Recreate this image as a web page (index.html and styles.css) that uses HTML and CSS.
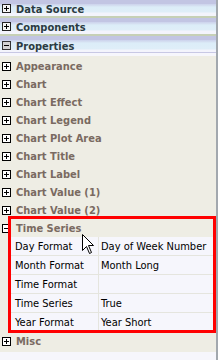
FILE: index.html
```html
<!DOCTYPE html>
<html lang="en">
<head>
    <meta charset="UTF-8">
    <title>Properties</title>
    <link rel="stylesheet" href="styles.css">
</head>
<body>
    <div class="panel">
        <div class="group">
            <svg class="toggle" width="9" height="9" viewBox="0 0 9 9"><rect x="0.5" y="0.5" width="8" height="8" fill="#f4f4f4" stroke="#222"/><path d="M2 4.5h5M4.5 2v5" stroke="#000"/></svg>
            Data Source
        </div>
        <div class="group">
            <svg class="toggle" width="9" height="9" viewBox="0 0 9 9"><rect x="0.5" y="0.5" width="8" height="8" fill="#f4f4f4" stroke="#222"/><path d="M2 4.5h5M4.5 2v5" stroke="#000"/></svg>
            Components
        </div>
        <div class="group open">
            <svg class="toggle" width="9" height="9" viewBox="0 0 9 9"><rect x="0.5" y="0.5" width="8" height="8" fill="#d4d4d4" stroke="#333"/><path d="M2 4.5h5" stroke="#000"/></svg>
            Properties
        </div>

        <ul class="cats">
            <li class="cat"><svg class="toggle" width="9" height="9" viewBox="0 0 9 9"><rect x="0.5" y="0.5" width="8" height="8" fill="#fff" stroke="#000"/><path d="M2 4.5h5M4.5 2v5" stroke="#000"/></svg>Appearance</li>
            <li class="cat"><svg class="toggle" width="9" height="9" viewBox="0 0 9 9"><rect x="0.5" y="0.5" width="8" height="8" fill="#fff" stroke="#000"/><path d="M2 4.5h5M4.5 2v5" stroke="#000"/></svg>Chart</li>
            <li class="cat"><svg class="toggle" width="9" height="9" viewBox="0 0 9 9"><rect x="0.5" y="0.5" width="8" height="8" fill="#fff" stroke="#000"/><path d="M2 4.5h5M4.5 2v5" stroke="#000"/></svg>Chart Effect</li>
            <li class="cat"><svg class="toggle" width="9" height="9" viewBox="0 0 9 9"><rect x="0.5" y="0.5" width="8" height="8" fill="#fff" stroke="#000"/><path d="M2 4.5h5M4.5 2v5" stroke="#000"/></svg>Chart Legend</li>
            <li class="cat"><svg class="toggle" width="9" height="9" viewBox="0 0 9 9"><rect x="0.5" y="0.5" width="8" height="8" fill="#fff" stroke="#000"/><path d="M2 4.5h5M4.5 2v5" stroke="#000"/></svg>Chart Plot Area</li>
            <li class="cat"><svg class="toggle" width="9" height="9" viewBox="0 0 9 9"><rect x="0.5" y="0.5" width="8" height="8" fill="#fff" stroke="#000"/><path d="M2 4.5h5M4.5 2v5" stroke="#000"/></svg>Chart Title</li>
            <li class="cat"><svg class="toggle" width="9" height="9" viewBox="0 0 9 9"><rect x="0.5" y="0.5" width="8" height="8" fill="#fff" stroke="#000"/><path d="M2 4.5h5M4.5 2v5" stroke="#000"/></svg>Chart Label</li>
            <li class="cat"><svg class="toggle" width="9" height="9" viewBox="0 0 9 9"><rect x="0.5" y="0.5" width="8" height="8" fill="#fff" stroke="#000"/><path d="M2 4.5h5M4.5 2v5" stroke="#000"/></svg>Chart Value (1)</li>
            <li class="cat"><svg class="toggle" width="9" height="9" viewBox="0 0 9 9"><rect x="0.5" y="0.5" width="8" height="8" fill="#fff" stroke="#000"/><path d="M2 4.5h5M4.5 2v5" stroke="#000"/></svg>Chart Value (2)</li>
            <li class="cat"><svg class="toggle" width="9" height="9" viewBox="0 0 9 9"><rect x="0.5" y="0.5" width="8" height="8" fill="#fff" stroke="#000"/><path d="M2 4.5h5" stroke="#000"/></svg>Time Series</li>
            <li>
                <table class="props">
                    <tr><td class="name">Day Format</td><td>Day of Week Number</td></tr>
                    <tr><td class="name">Month Format</td><td>Month Long</td></tr>
                    <tr><td class="name">Time Format</td><td></td></tr>
                    <tr><td class="name">Time Series</td><td>True</td></tr>
                    <tr><td class="name">Year Format</td><td>Year Short</td></tr>
                </table>
            </li>
            <li class="cat"><svg class="toggle" width="9" height="9" viewBox="0 0 9 9"><rect x="0.5" y="0.5" width="8" height="8" fill="#fff" stroke="#000"/><path d="M2 4.5h5M4.5 2v5" stroke="#000"/></svg>Misc</li>
        </ul>

        <!-- annotation box round the time series section -->
        <div class="highlight"></div>
        <svg class="pointer" width="13" height="21" viewBox="0 0 13 21"><path d="M0.5 0.5V16.5L4.5 12.5L7.5 19.5L9.5 18.5L6.5 11.5H11.5Z" fill="#fff" stroke="#000" stroke-linejoin="miter"/></svg>
    </div>
</body>
</html>
```

FILE: styles.css
```css
body {
    margin: 0;
    padding: 0;
    background-color: #f6f6fc;
    font-family: 'DejaVu Sans Condensed', 'Liberation Sans', sans-serif;
}

.panel {
    position: relative;
    width: 216px;
    height: 360px;
    border-right: 2px solid #a2a8ae;
    background-color: #f6f6fc;
}

/* Top level groups */
.group {
    display: flex;
    align-items: center;
    height: 18px;
    padding-left: 2px;
    font-size: 11px;
    font-weight: bold;
    color: #2b3b42;
    background: linear-gradient(to bottom,
        #c2c5e3 0, #c2c5e3 4px,
        #ccd2ec 4px, #d6e2f2 6px,
        #dcedf8 7px, #dfeef8 12px,
        #f3f4fc 13px, #f3f4fc 16px,
        #c6d0b6 16px, #c6d0b6 18px);
}
.group.open {
    height: 20px;
    background: linear-gradient(to bottom,
        #c2c5e3 0, #c2c5e3 4px,
        #ccd2ec 4px, #d6e2f2 6px,
        #dcedf8 7px, #dfeef8 13px,
        #f3f4fc 14px, #f3f4fc 16px,
        #c8c8e4 16px, #c8c8e4 17px,
        #f6f6fc 17px, #f6f6fc 20px);
}
.toggle {
    display: block;
    flex: none;
    margin-right: 5px;
}
.group .toggle {
    margin-top: -2px;
}

/* Property categories */
.cats {
    list-style: none;
    margin: 0;
    padding: 1px 0 2px;
    background-color: #eeede4;
}
.cat {
    display: flex;
    align-items: center;
    height: 18px;
    padding-left: 2px;
    font-size: 11px;
    font-weight: bold;
    color: #7a6a61;
}

.props {
    margin-left: 11px;
    width: 205px;
    border-collapse: collapse;
    background-color: #f6f6fc;
    font-size: 11px;
    color: #000;
}
.props td {
    height: 18px;
    padding: 0 0 0 2px;
    border-bottom: 1px solid #e5e5de;
    white-space: nowrap;
}
.props td.name {
    width: 83px;
    padding-left: 4px;
    border-right: 1px solid #e5e5de;
}

.highlight {
    position: absolute;
    left: 8px;
    top: 216px;
    width: 202px;
    height: 111px;
    border: 3px solid #ff0000;
}

.pointer {
    position: absolute;
    left: 82px;
    top: 234px;
}
```
